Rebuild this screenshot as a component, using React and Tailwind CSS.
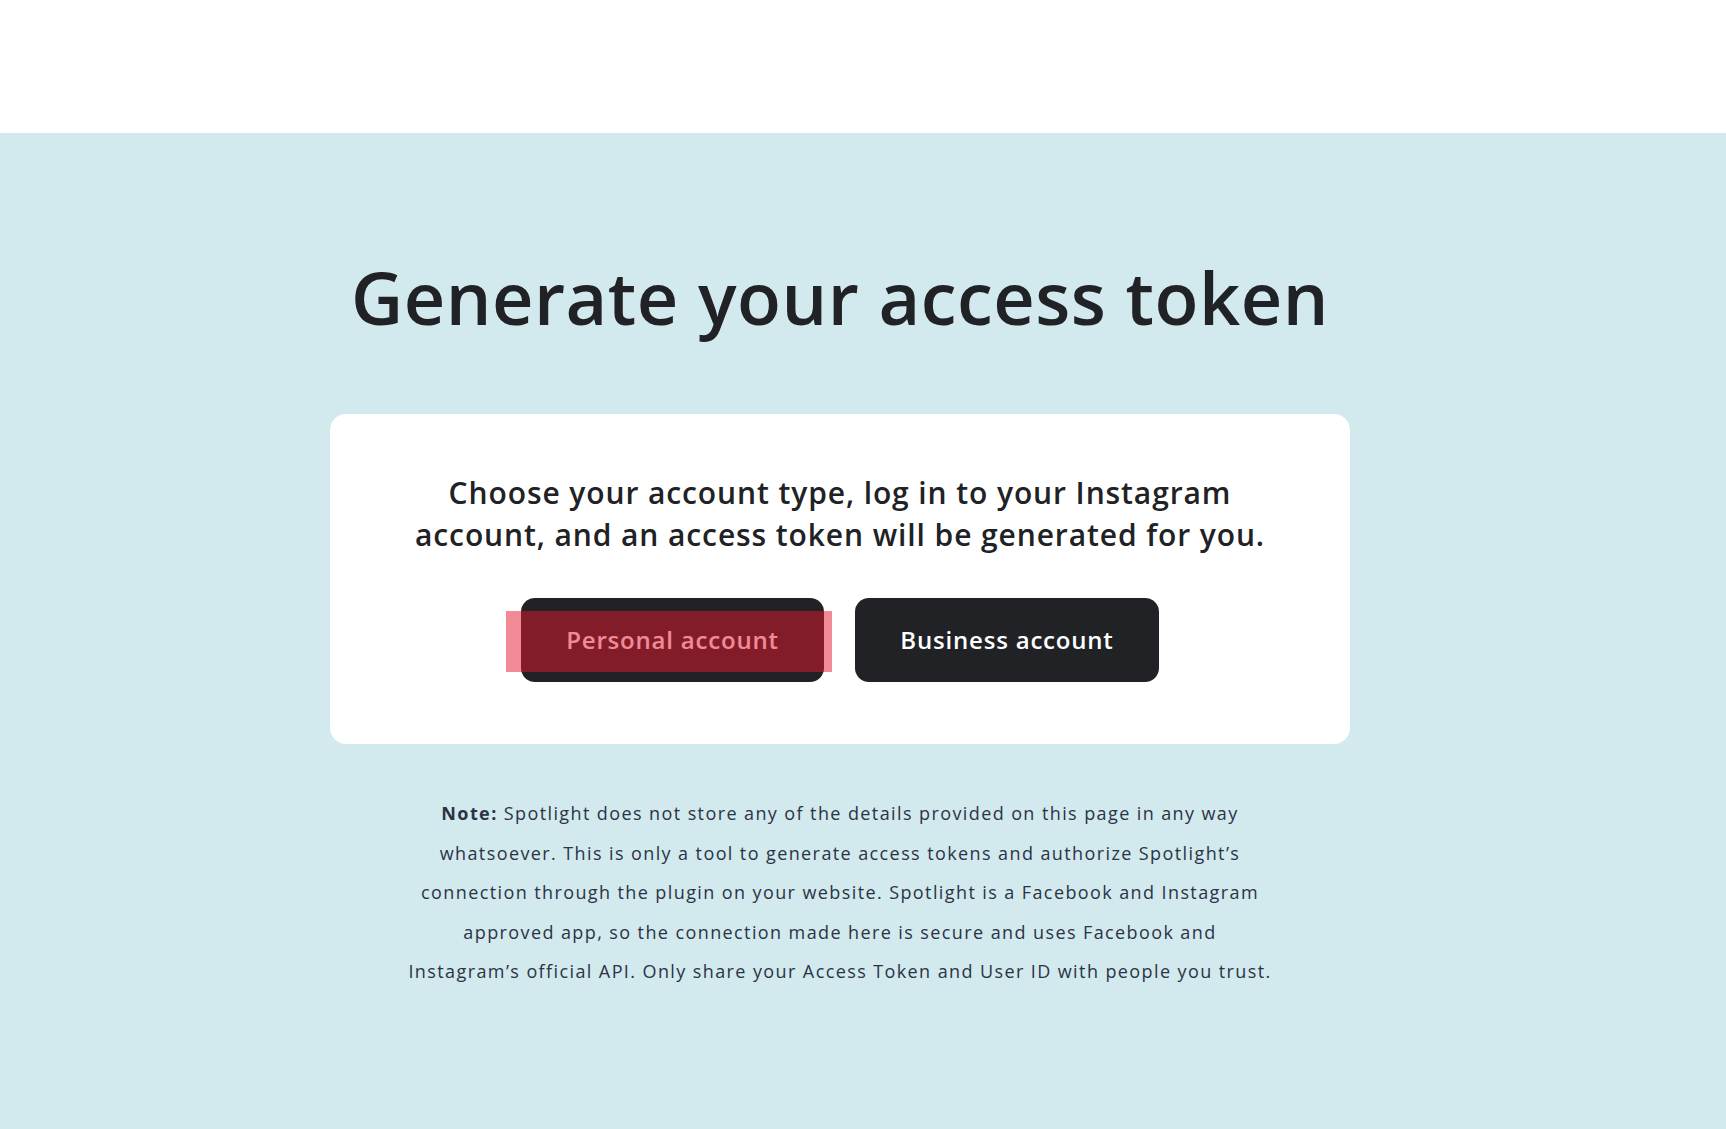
const NoteText = () => (
  <p className="w-[920px] text-center text-[18px] leading-[39.6px] tracking-[1.4px] text-[#2b3445]">
    <strong className="font-bold">Note:</strong> Spotlight does not store any of the details provided on this page in any way
    <br />
    whatsoever. This is only a tool to generate access tokens and authorize Spotlight’s
    <br />
    connection through the plugin on your website. Spotlight is a Facebook and Instagram
    <br />
    approved app, so the connection made here is secure and uses Facebook and
    <br />
    Instagram’s official API. Only share your Access Token and User ID with people you trust.
  </p>
);

const App = () => {
  return (
    <div className="min-h-screen flex flex-col font-['Open_Sans',sans-serif] text-[#202225]">
      <header className="h-[133px] bg-white shrink-0" />

      <main className="flex-1 bg-[#d2e9ee] flex flex-col items-center pt-[122px] pb-[120px] pr-[46px]">
        <h1 className="text-[72px] leading-[84px] font-semibold tracking-[0.5px] text-[#202225] whitespace-nowrap">
          Generate your access token
        </h1>

        <div className="mt-[75px] w-[1020px] h-[330px] bg-white rounded-2xl flex flex-col items-center pt-[58px]">
          <p className="text-[30px] leading-[42px] font-semibold tracking-[0.9px] text-center w-[980px]">
            Choose your account type, log in to your Instagram
            <br />
            account, and an access token will be generated for you.
          </p>

          <div className="mt-[42px] flex gap-[31px]">
            <div className="relative">
              <button className="w-[303px] h-[84px] rounded-[14px] bg-[#212226] text-white text-[24px] tracking-[0.8px] font-semibold">
                Personal account
              </button>
              <div className="absolute top-[13px] bottom-[10px] -left-[15px] -right-[8px] bg-[#e5162c]/50 pointer-events-none" />
            </div>
            <button className="w-[304px] h-[84px] rounded-[14px] bg-[#212226] text-white text-[24px] tracking-[0.8px] font-semibold">
              Business account
            </button>
          </div>
        </div>

        <div className="mt-[50px]">
          <NoteText />
        </div>
      </main>
    </div>
  );
};

export default App;
